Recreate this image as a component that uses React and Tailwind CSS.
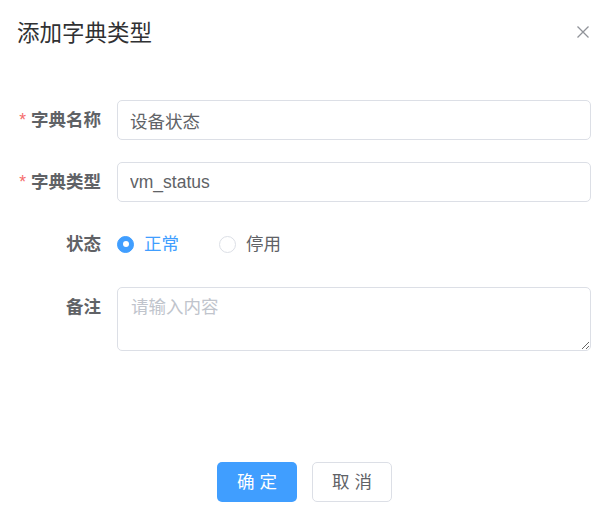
import { useState } from 'react';

const font = { fontFamily: '"Liberation Sans", "Noto Sans CJK SC", sans-serif' };

function FormRow({ label, required, children, className = '' }) {
  return (
    <div className={`flex items-start ${className}`}>
      <label className="w-[101px] shrink-0 text-right text-[17.5px] font-bold leading-[40px] text-[#606266]">
        {required && <span className="mr-[5px] font-normal text-[#f56c6c]">*</span>}
        {label}
      </label>
      <div className="ml-[16px] flex-1">{children}</div>
    </div>
  );
}

function Radio({ checked, label, onClick }) {
  return (
    <button type="button" onClick={onClick} className="flex items-center">
      <span
        className={`flex h-[17px] w-[17px] items-center justify-center rounded-full border ${
          checked ? 'border-[#409eff] bg-[#409eff]' : 'border-[#dcdfe6] bg-white'
        }`}
      >
        {checked && <span className="h-[6px] w-[6px] rounded-full bg-white" />}
      </span>
      <span className={`ml-[10px] text-[17.5px] leading-[40px] ${checked ? 'text-[#409eff]' : 'text-[#606266]'}`}>
        {label}
      </span>
    </button>
  );
}

export default function App() {
  const [status, setStatus] = useState('0');

  return (
    <div className="h-[518px] w-full bg-white" style={font}>
      {/* Header */}
      <div className="flex items-start justify-between pl-[17px] pr-[24px] pt-[19px]">
        <h2 className="text-[22.5px] leading-[30px] text-[#303133]">添加字典类型</h2>
        <button type="button" className="mt-[7px]">
          <svg width="12" height="12" viewBox="0 0 12 12" fill="none" stroke="#909399" strokeWidth="1.3">
            <path d="M0.5 0.5 11.5 11.5M11.5 0.5 0.5 11.5" />
          </svg>
        </button>
      </div>

      {/* Form */}
      <div className="mt-[51px] pr-[22px]">
        <FormRow label="字典名称" required className="mb-[22px]">
          <input
            defaultValue="设备状态"
            className="h-[40px] w-full rounded-[5px] border border-[#dcdfe6] px-[12px] text-[17.5px] text-[#606266] outline-none"
          />
        </FormRow>
        <FormRow label="字典类型" required className="mb-[22px]">
          <input
            defaultValue="vm_status"
            className="h-[40px] w-full rounded-[5px] border border-[#dcdfe6] px-[12px] text-[17.5px] text-[#606266] outline-none"
          />
        </FormRow>
        <FormRow label="状态" className="mb-[23px]">
          <div className="flex h-[40px] items-center gap-[40px]">
            <Radio checked={status === '0'} label="正常" onClick={() => setStatus('0')} />
            <Radio checked={status === '1'} label="停用" onClick={() => setStatus('1')} />
          </div>
        </FormRow>
        <FormRow label="备注">
          <textarea
            placeholder="请输入内容"
            className="block h-[64px] w-full resize-y rounded-[5px] border border-[#dcdfe6] px-[13px] py-[6px] text-[17.5px] leading-[26px] text-[#606266] outline-none placeholder:text-[#c0c4cc]"
          />
        </FormRow>
      </div>

      {/* Footer */}
      <div className="mt-[111px] flex justify-center gap-[15px] pr-[4px]">
        <button type="button" className="h-[40px] w-[80px] rounded-[5px] bg-[#409eff] text-[17.5px] text-white">
          确 定
        </button>
        <button
          type="button"
          className="h-[40px] w-[80px] rounded-[5px] border border-[#dcdfe6] bg-white text-[17.5px] text-[#606266]"
        >
          取 消
        </button>
      </div>
    </div>
  );
}
